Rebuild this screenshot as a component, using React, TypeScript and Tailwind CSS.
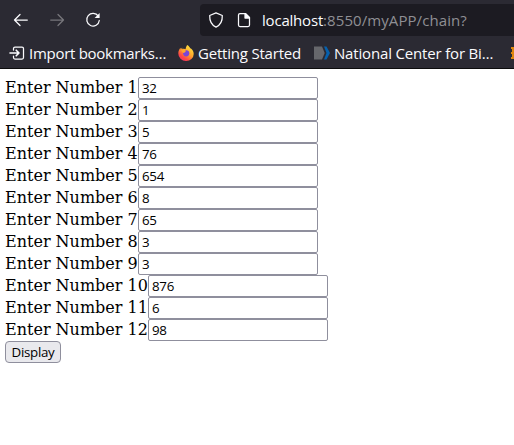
import type { ReactNode } from "react";

const fields = ["32", "1", "5", "76", "654", "8", "65", "3", "3", "876", "6", "98"];

function Icon({ children, className }: { children: ReactNode; className: string }) {
  return (
    <svg
      viewBox="0 0 16 16"
      className={`size-4 shrink-0 ${className}`}
      fill="none"
      stroke="currentColor"
      strokeWidth="1.25"
      strokeLinecap="round"
      strokeLinejoin="round"
    >
      {children}
    </svg>
  );
}

function Firefox() {
  return (
    <svg viewBox="0 0 16 16" className="size-4 shrink-0">
      <defs>
        <linearGradient id="flame" x1="0.85" y1="0" x2="0.15" y2="1">
          <stop offset="0" stopColor="#fff044" />
          <stop offset="0.45" stopColor="#ffa52b" />
          <stop offset="0.75" stopColor="#ff4a45" />
          <stop offset="1" stopColor="#f02a70" />
        </linearGradient>
      </defs>
      <path
        d="M9.200 0c1.800 1 2.600 2.300 3 3.200.5.1 1 .5 1.300.8 1.400 1.300 2.200 3.100 2.200 5A7.600 7 0 0 1 8 16 7.700 7.400 0 0 1 .3 8.500c0-2.300.8-4 2.200-5.700l.3 1.600 1.300-1.900.3 1.700C6 3.500 7 4 7.600 4.200 7.800 2.600 8.300 1.100 9.200 0Z"
        fill="url(#flame)"
      />
      <circle cx="8.200" cy="8.300" r="3.100" fill="#7a45d8" />
      <path d="M3.200 5.400c1.300-.9 3.600-.6 4.700.4L7.200 7.300l-1.900.7Z" fill="#ffa52d" />
    </svg>
  );
}

export default function App() {
  return (
    <div className="h-[445px] w-[514px] overflow-hidden bg-white">
      <header className="flex h-[69px] flex-col overflow-hidden border-b border-[#0c0c0d] bg-[#2b2a33] font-['Open_Sans','Noto_Sans',sans-serif] text-[#fbfbfe]">
        <nav className="flex h-[38px] shrink-0 items-center pt-px">
          <Icon className="ml-[13px]">
            <path d="M14.300 8H1.500M7 2.500 1.500 8 7 13.500" />
          </Icon>
          <Icon className="ml-5 text-[#77767c]">
            <path d="M1.700 8h12.800M9 2.500 14.500 8 9 13.500" />
          </Icon>
          <Icon className="ml-5">
            <path d="M13.300 4.200A6.300 6.300 0 1 0 14.300 8.500" />
            <path d="M14.600 1v5H9.600Z" fill="currentColor" stroke="none" />
          </Icon>
          <div className="ml-[99px] flex h-8 w-[314px] shrink-0 items-center rounded-l bg-[#1c1b22] pl-2">
            <Icon className="">
              <path d="M8 .9 14.300 3.500C14.500 8.800 12.500 13 8 15.100 3.500 13 1.500 8.800 1.700 3.500Z" />
            </Icon>
            <Icon className="ml-3">
              <path d="M4 1.500h5.500l4 4V13q0 1.500-1.500 1.500H4Q2.500 14.500 2.500 13V3Q2.500 1.500 4 1.500Z" />
              <path d="M9 1.500 13.500 6H9Z" fill="currentColor" />
            </Icon>
            <div className="ml-[10px] whitespace-nowrap text-[15px] leading-5">
              <span className="tracking-[-0.2px]">localhost</span>
              <span className="tracking-[0.08px] text-[#8f8f94]">:8550/myAPP/chain?</span>
            </div>
          </div>
        </nav>
        <div className="flex h-[30px] shrink-0 items-center whitespace-nowrap text-[15px] leading-5">
          <Icon className="ml-[9px]">
            <path d="M4.500 5V3.500q0-1.500 1.500-1.500h7q1.500 0 1.500 1.500v9q0 1.500-1.500 1.500H6q-1.500 0-1.500-1.500V11" />
            <path d="M1 8h9M7.200 5.200 10 8l-2.800 2.800" strokeWidth="1.6" />
          </Icon>
          <span className="ml-1 w-[137px] shrink-0 tracking-[-0.28px]">Import bookmarks…</span>
          <span className="ml-3 flex"><Firefox /></span>
          <span className="ml-1 w-[104px] shrink-0 tracking-[-0.2px]">Getting Started</span>
          <svg viewBox="0 0 16 16" className="ml-3 size-4 shrink-0">
            <path d="M0 1.500h8l2.700 6.500L8 14.500H0Z" fill="#66676c" />
            <path d="M10 1.500h2.500L16 8l-3.500 6.500H10L12.500 8Z" fill="#0660ad" />
          </svg>
          <span className="ml-1 w-[161px] shrink-0 tracking-[-0.17px]">National Center for Bi…</span>
          <svg viewBox="0 0 16 16" className="ml-[15px] size-4 shrink-0" fill="#df850d">
            <path d="M1 2h4v2H1zM1 7h4v2H1zM1 12h4v2H1zM2 4h2v3H2zM2 9h2v3H2z" />
          </svg>
        </div>
      </header>
      <main className="px-[5px] pt-2 text-black">
        {fields.map((value, index) => (
          <label key={index} className="flex h-[22px] items-center font-['DejaVu_Serif',serif] text-[16px] leading-[22px]">
            <span className={`shrink-0 whitespace-nowrap ${index < 9 ? "w-[133px]" : "w-[143px]"}`}>Enter Number {index + 1}</span>
            <input
              defaultValue={value}
              className="h-[22px] w-[180px] rounded-[2px] border border-[#8f8f9d] bg-white px-[3px] font-['Open_Sans','Noto_Sans',sans-serif] text-[13.333px] font-medium tracking-[-0.3px] outline-none"
            />
          </label>
        ))}
        <button className="flex h-[22px] w-14 items-center justify-center rounded-[4px] border border-[#8f8f9d] bg-[#e9e9ed] pt-px font-['Open_Sans','Noto_Sans',sans-serif] text-[13.333px] font-medium tracking-[-0.3px]">
          Display
        </button>
      </main>
    </div>
  );
}
